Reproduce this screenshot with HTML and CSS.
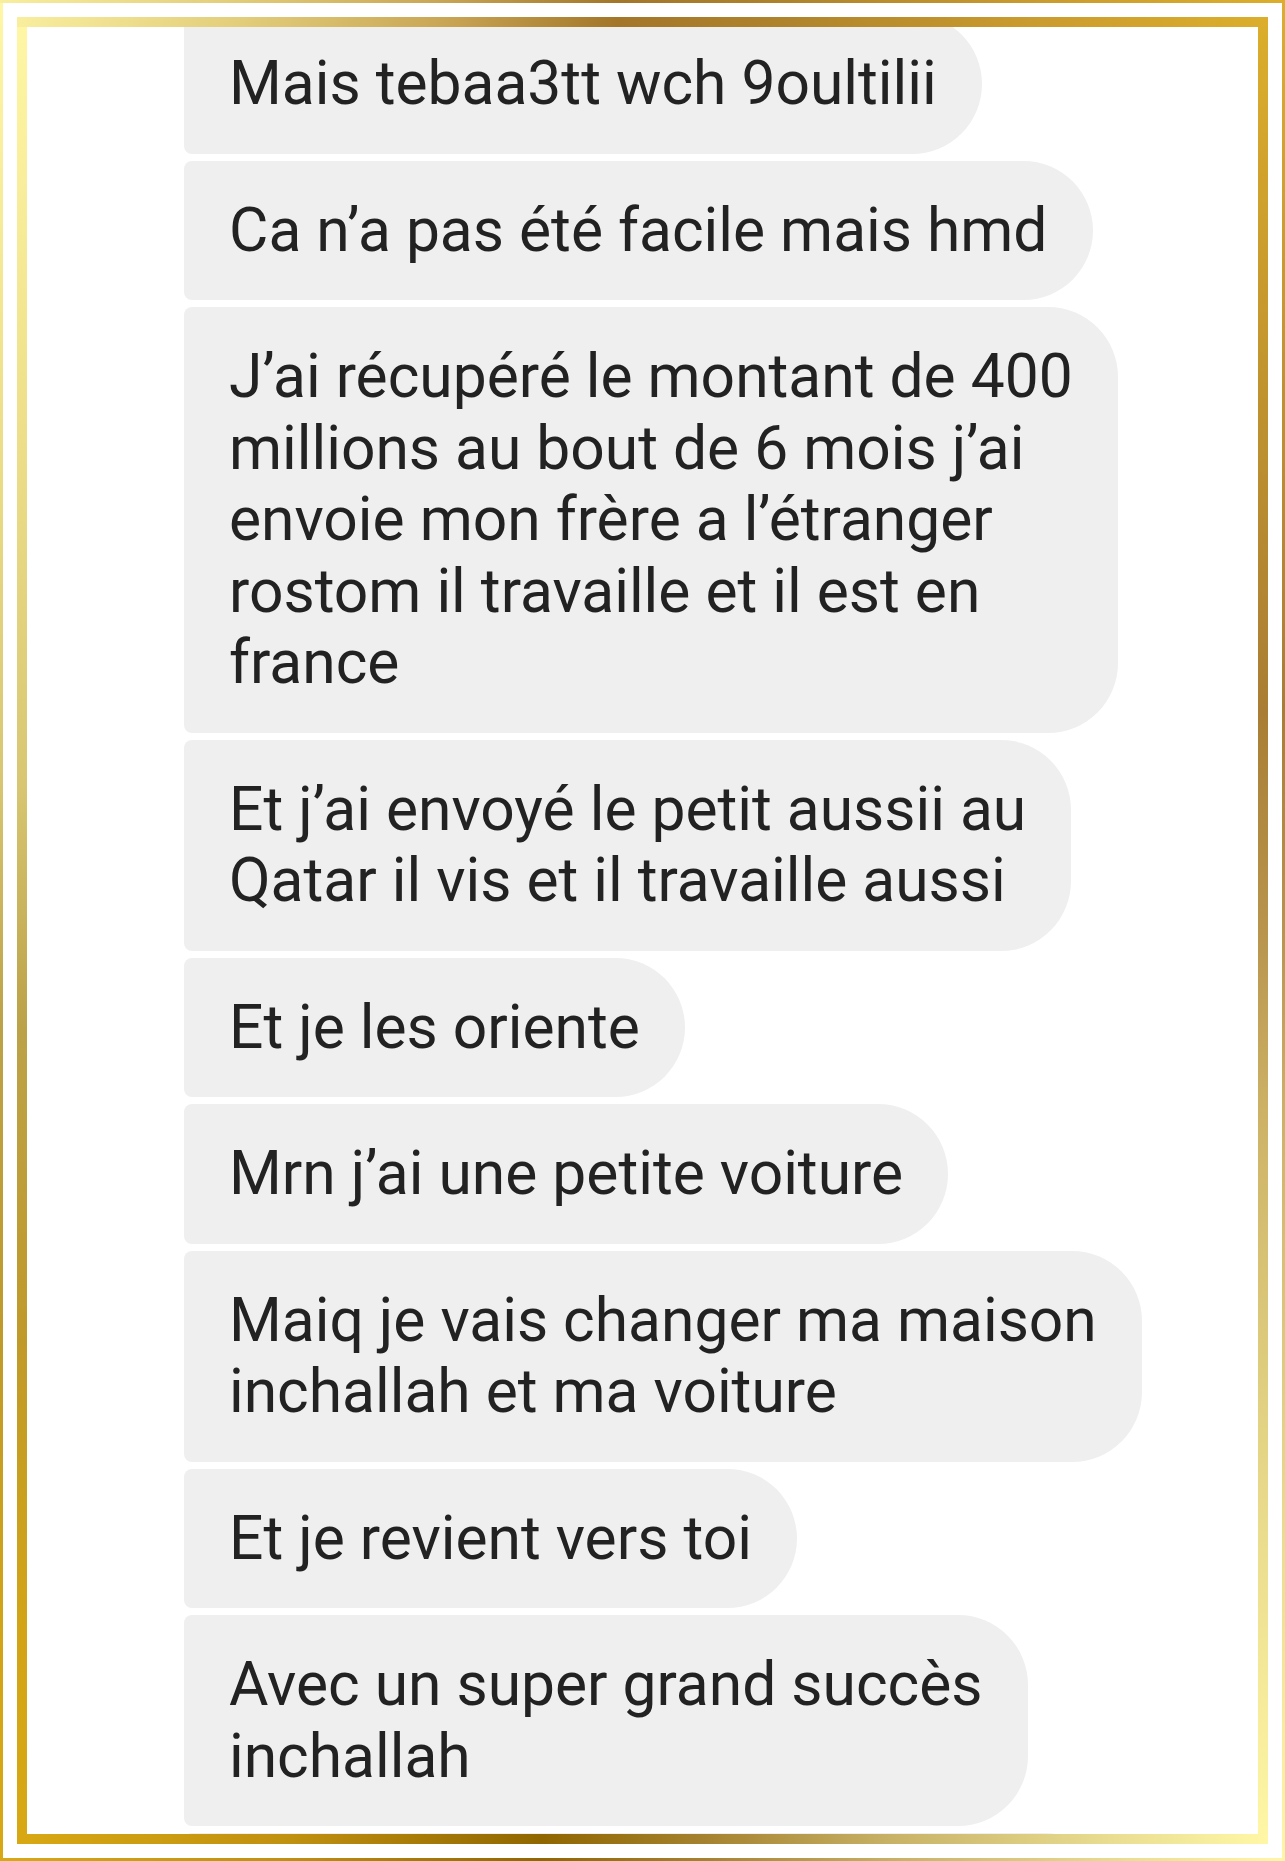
FILE: index.html
```html
<!DOCTYPE html>
<html lang="fr">
<head>
<meta charset="utf-8">
<title>Messages</title>
<link rel="stylesheet" href="styles.css">
</head>
<body>
<div class="frame">
  <div class="chat">
    <div class="bubble">Mais tebaa3tt wch 9oultilii</div>
    <div class="bubble">Ca n’a pas été facile mais hmd</div>
    <div class="bubble">J’ai récupéré le montant de 400<br>millions au bout de 6 mois j’ai<br>envoie mon frère a l’étranger<br>rostom il travaille et il est en<br>france</div>
    <div class="bubble">Et j’ai envoyé le petit aussii au<br>Qatar il vis et il travaille aussi</div>
    <div class="bubble">Et je les oriente</div>
    <div class="bubble">Mrn j’ai une petite voiture</div>
    <div class="bubble">Maiq je vais changer ma maison<br>inchallah et ma voiture</div>
    <div class="bubble">Et je revient vers toi</div>
    <div class="bubble">Avec un super grand succès<br>inchallah</div>
    <div class="bubble bubble-next"></div>
  </div>
</div>
</body>
</html>
```
FILE: styles.css
```css
html, body {
  margin: 0;
  background: #ffffff;
}

.frame {
  --g-top: linear-gradient(to right, #f8ee9e 0%, #e2cd7a 18%, #c9a655 34%, #a3762a 48%, #b0842c 62%, #c99a2e 80%, #dcae2c 100%);
  --g-right: linear-gradient(to bottom, #dcae2c 0%, #c4962e 18%, #a97e34 38%, #b8944c 50%, #cdb266 60%, #e6d888 80%, #fff7a6 100%);
  --g-bottom: linear-gradient(to right, #d8a814 0%, #c09010 22%, #906600 42%, #a58230 55%, #c8b266 70%, #e6da8e 86%, #fff7a6 100%);
  --g-left: linear-gradient(to bottom, #fff7a6 0%, #eee08a 22%, #d8c672 42%, #bca248 55%, #c09a2a 72%, #d2a416 88%, #d8a814 100%);
  width: 1285px;
  height: 1861px;
  box-sizing: border-box;
  padding: 27px;
  background:
    var(--g-top) 17px 17px / 1251px 10px no-repeat,
    var(--g-bottom) 17px 1834px / 1251px 10px no-repeat,
    var(--g-left) 17px 17px / 10px 1827px no-repeat,
    var(--g-right) 1258px 17px / 10px 1827px no-repeat,
    var(--g-top) 0 0 / 100% 3px no-repeat,
    var(--g-bottom) 0 1858px / 100% 3px no-repeat,
    var(--g-left) 0 0 / 3px 100% no-repeat,
    var(--g-right) 1282px 0 / 3px 100% no-repeat,
    #ffffff;
}

.chat {
  height: 100%;
  overflow: hidden;
  display: flex;
  flex-direction: column;
  align-items: flex-start;
  gap: 7px;
  padding-left: 157px;
}

.bubble {
  flex: none;
  background: #efefef;
  color: #222222;
  font-family: Roboto, "Liberation Sans", sans-serif;
  font-weight: 400;
  font-size: 60.5px;
  line-height: 71.5px;
  padding: 34px 45px;
  border-radius: 8px 70px 70px 8px;
  white-space: nowrap;
}

.bubble:first-child {
  margin-top: -13px;
}

.bubble-next {
  width: 840px;
  height: 71.5px;
}
```
